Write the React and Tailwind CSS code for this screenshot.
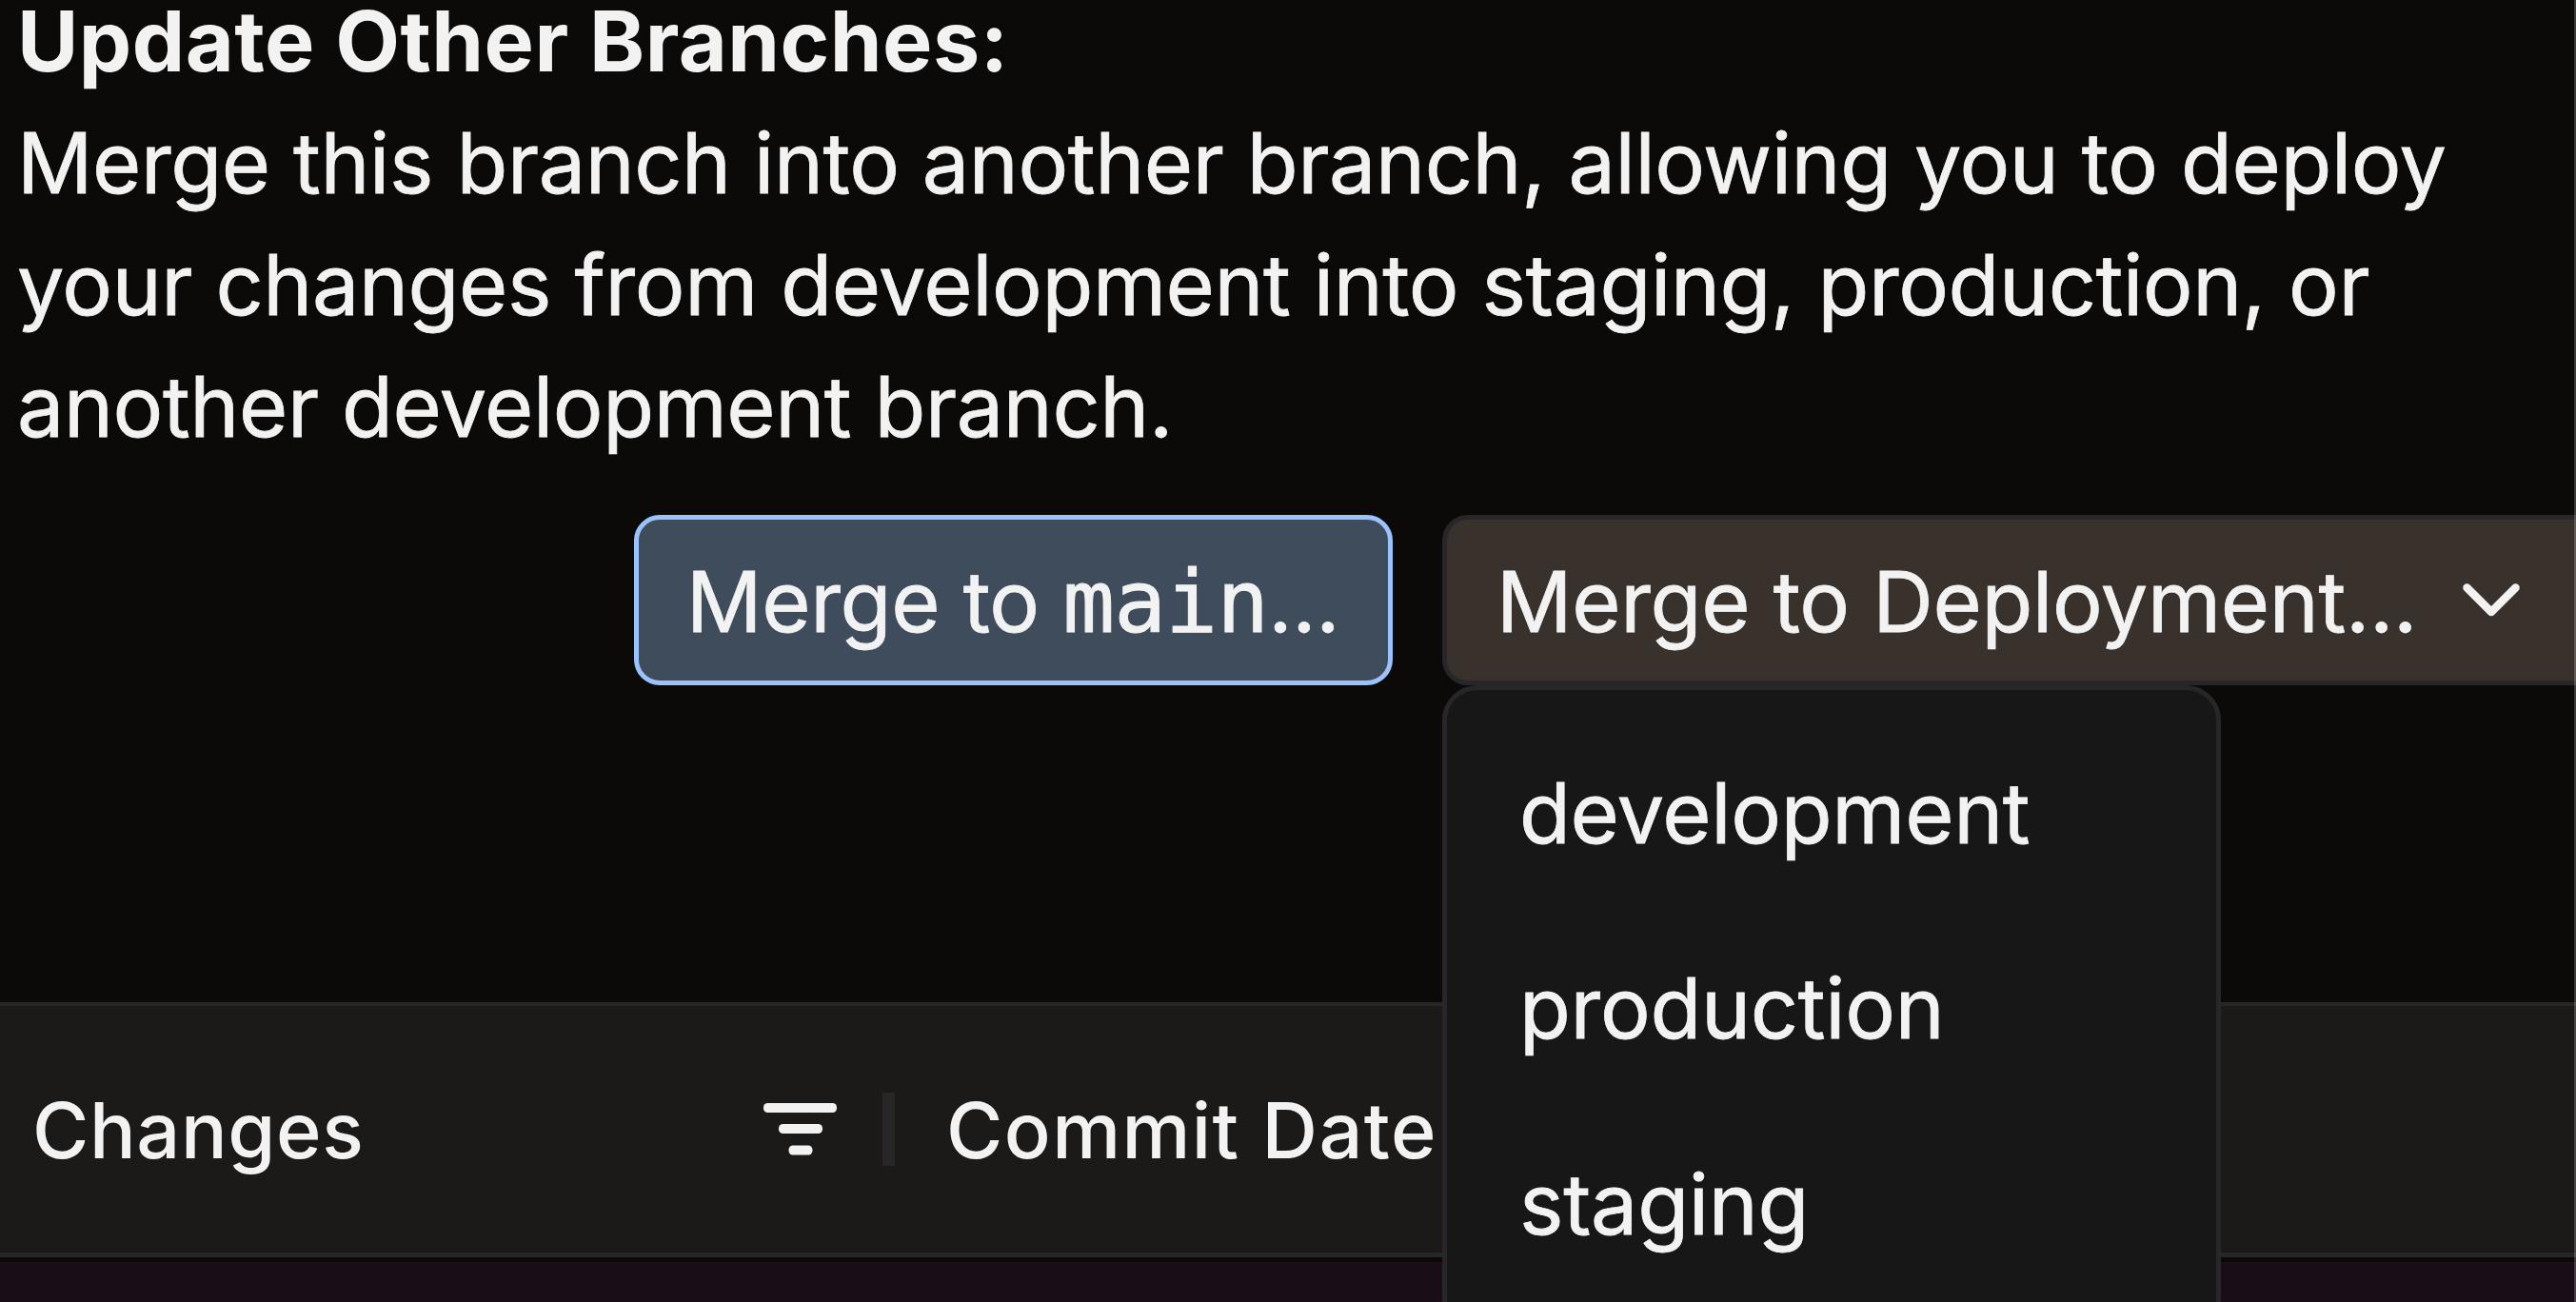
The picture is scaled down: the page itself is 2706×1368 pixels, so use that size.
const deployments = ['development', 'production', 'staging'];

function FilterIcon() {
  return (
    <svg className="w-[78px] h-[55px]" viewBox="0 0 78 55" fill="currentColor">
      <rect x="0" y="0" width="77" height="10" rx="4.5" />
      <rect x="16" y="22" width="46" height="10" rx="4.5" />
      <rect x="26.5" y="44.5" width="25" height="10" rx="4.5" />
    </svg>
  )
}

function ChevronIcon() {
  return (
    <svg className="w-[60px] h-[35px] shrink-0" viewBox="0 0 60 35" fill="none" stroke="currentColor" strokeWidth="8.5" strokeLinecap="round" strokeLinejoin="round">
      <path d="M4.5 4.5L30 30L55.5 4.5" />
    </svg>
  )
}

export default function App() {
  return (
    <main className="relative flex flex-col w-[2706px] h-[1368px] overflow-hidden bg-[#0b0a08] text-[#f2f2f2] font-['Inter',sans-serif] text-[88px] leading-[128px] whitespace-nowrap">
      <section className="h-[1053px] shrink-0">
        <div className="pl-[18px] h-[491px] tracking-[-0.4px] [-webkit-text-stroke:0.8px]">
          <h2 className="font-bold leading-[86px] mb-[21px] tracking-[0.45px] [-webkit-text-stroke:0]">Update Other Branches:</h2>
          <p>Merge this branch into another branch, allowing you to deploy</p>
          <p>your changes from development into staging, production, or</p>
          <p>another development branch.</p>
        </div>
        <div className="flex gap-[52px] pl-[666px] pt-[50px] tracking-[-0.3px] [-webkit-text-stroke:0.8px]">
          <button className="flex items-center w-[797px] h-[179px] shrink-0 border-[5px] border-[#9ac2fc] bg-[#3e4c5c] rounded-[27px] pl-[50px] pt-[3px]">
            <span>Merge to <code className="font-['DejaVu_Sans_Mono',monospace] text-[91px] leading-none tracking-[-0.8px] [-webkit-text-stroke:1px]">main</code>...</span>
          </button>
          <div className="relative">
            <button className="flex items-center w-[1250px] h-[179px] border-[5px] border-[#27272a] bg-[#39322c] rounded-[27px] pl-[52px] gap-[48px]">
              <span className="pt-[3px]">Merge to Deployment...</span>
              <ChevronIcon />
            </button>
            <ul className="absolute z-10 left-0 top-[179px] w-[818px] h-[680px] border-[5px] border-[#27272a] bg-[#171717] rounded-[37px] pl-[76px] pt-[26px]">
              {deployments.map((name) => (
                <li key={name} className="h-[205.5px] flex items-center">{name}</li>
              ))}
            </ul>
          </div>
        </div>
      </section>
      <section className="flex items-center h-[268px] shrink-0 border-t-4 border-b-[5px] border-[#27272a] bg-[#1b1a18] text-[81px] font-medium">
        <div className="w-[802px] pl-[34px] pt-[2px] tracking-[0.6px]">Changes</div>
        <FilterIcon />
        <div className="w-[13px] h-[77px] bg-[#27272a] ml-[47px] mr-[54px]"></div>
        <div className="pt-[2px] tracking-[1.4px]">Commit Date</div>
      </section>
      <div className="mt-[5px] grow bg-[#190d18]"></div>
      {/* right edge of the dialog */}
      <div className="absolute z-20 inset-y-0 right-0 w-[2px] bg-white/20"></div>
    </main>
  )
}
